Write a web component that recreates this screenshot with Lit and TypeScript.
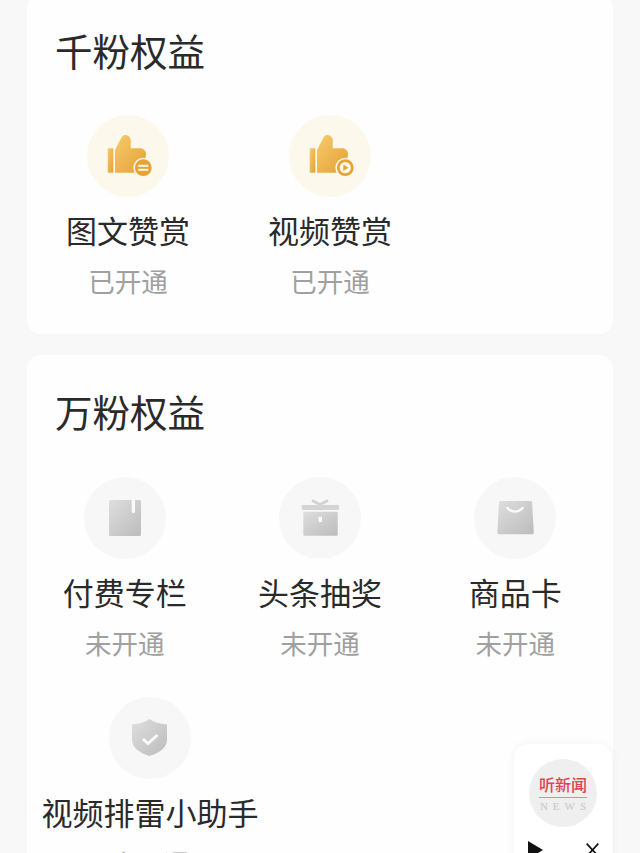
import { LitElement, html, css, svg } from "lit";
import { customElement } from "lit/decorators.js";

const thumb = (badge: unknown) => html`<svg viewBox="0 0 48 48" width="48" height="48">
  <defs><linearGradient id="gold" x1="0" y1="0" x2="1" y2="1"><stop offset="0" stop-color="#f6cb6c"/><stop offset="1" stop-color="#e5a033"/></linearGradient></defs>
  <rect x="3.700" y="16.300" width="5.600" height="24.400" fill="url(#gold)"/>
  <path d="M11 40.700V18l6.500-12.500C18.300 3.900 19.600 3 21 3c3 0 5.700 2.200 5.700 5.200v8.100H36c3.500 0 6 2.600 6 5.700 0 2-.6 4-1.400 6L35 40.700z" fill="url(#gold)"/>
  <circle cx="39.300" cy="35.700" r="10" fill="#fdf8ec"/>
  <circle cx="39.300" cy="35.700" r="8.400" fill="#e6a437"/>
  ${badge}
</svg>`;
const eq = svg`<rect x="34.300" y="32.800" width="10" height="2" fill="#fdf8ec"/><rect x="34.300" y="36.800" width="10" height="2" fill="#fdf8ec"/>`;
const play = svg`<circle cx="39.300" cy="35.700" r="5.600" fill="#fdf8ec"/><path d="M37.300 32.500l5.200 3.200-5.200 3.200z" fill="#e6a437"/>`;
const G = svg`<defs><linearGradient id="grey" x1="0" y1="0" x2="1" y2="1"><stop offset="0" stop-color="#dedede"/><stop offset="1" stop-color="#bcbcbc"/></linearGradient></defs>`;
const book = html`<svg viewBox="0 0 48 48" width="48" height="48">${G}
  <rect x="8" y="6" width="32" height="36" rx="1.500" fill="url(#grey)"/>
  <rect x="30.700" y="5" width="3.300" height="14" rx="1.600" fill="#fafafa"/></svg>`;
const gift = html`<svg viewBox="0 0 48 48" width="48" height="48">${G}
  <path d="M16 6.500l8 4 8-4" fill="none" stroke="#d2d2d2" stroke-width="2.600"/>
  <rect x="5.700" y="11" width="37.300" height="5" rx="1" fill="#d4d4d4"/>
  <rect x="7.300" y="17.700" width="34.400" height="24" rx="1" fill="url(#grey)"/>
  <rect x="22.500" y="22.800" width="3.500" height="5.200" fill="#fafafa"/></svg>`;
const bag = html`<svg viewBox="0 0 48 48" width="48" height="48">${G}
  <path d="M9.500 7h30c1 0 1.500.5 1.600 1.500L42.800 38.500c0 1-.7 1.800-1.700 1.800H8c-1 0-1.700-.8-1.700-1.800L8 8.500C8 7.500 8.500 7 9.500 7z" fill="url(#grey)"/>
  <path d="M16.500 14c4 4.800 11 4.800 15 0" fill="none" stroke="#fafafa" stroke-width="2.400" stroke-linecap="round"/></svg>`;
const shield = html`<svg viewBox="0 0 48 48" width="48" height="48">${G}
  <path d="M23.500 5c4 3 10 5 17.500 5.500v15c0 8-7.500 13.500-17.500 16.500C13.500 39 6 33.500 6 25.500v-15C13.500 10 19.500 8 23.500 5z" fill="url(#grey)"/>
  <path d="M17 25l5 4.500 9.500-8.500" fill="none" stroke="#fafafa" stroke-width="3"/></svg>`;

@customElement("app-root")
export class AppRoot extends LitElement {
  static styles = css`
    :host { display: block; width: 640px; height: 853px; overflow: hidden; position: relative; background: #f8f8f8;
      font-family: "Noto Sans CJK SC", "Liberation Sans", sans-serif; }
    .page { margin-top: -6px; padding: 0 27px; display: flex; flex-direction: column; gap: 21px; }
    .card { background: #fefefe; border-radius: 14px; height: 340px; box-sizing: border-box; padding: 28px 0 0; flex: none; }
    .card.big { height: 560px; }
    .title { font-size: 37.500px; line-height: 56px; margin-left: 28px; color: #2a2a2a; font-weight: 400; white-space: nowrap; }
    .grid { display: grid; margin-top: 37px; }
    .big .grid { margin-top: 38px; }
    .two { grid-template-columns: 202px 202px; }
    .three { grid-template-columns: repeat(3, minmax(0, 1fr)); }
    .item { height: 220px; display: flex; flex-direction: column; align-items: center; }
    .wide { width: 216px; margin-left: 15px; }
    .circle { width: 82px; height: 82px; border-radius: 50%; background: #f8f7f7; display: flex; align-items: center; justify-content: center; flex: none; }
    .gold .circle { background: #fdf8ec; }
    .label { font-size: 31px; line-height: 44px; margin-top: 11px; color: #2a2a2a; white-space: nowrap; }
    .status { font-size: 26.500px; line-height: 38px; margin-top: 10px; color: #a0a0a0; white-space: nowrap; }
    .player { position: absolute; left: 514px; top: 744px; width: 98px; height: 130px; background: #fff; border-radius: 14px;
      box-shadow: 0 0 10px rgba(0,0,0,.05); display: flex; flex-direction: column; align-items: center; padding-top: 15px; box-sizing: border-box; }
    .logo { width: 68px; height: 68px; border-radius: 50%; background: #efefef; display: flex; flex-direction: column; align-items: center; justify-content: center; }
    .cn { font-size: 16px; line-height: 20px; font-weight: 500; color: #d8474d; border-bottom: 1px solid #d98d90; padding-bottom: 3px; white-space: nowrap; }
    .en { font-family: "Liberation Serif", serif; font-size: 11px; line-height: 13px; letter-spacing: 5px; margin-right: -5px; color: #c6c6c6; margin-top: 2px; }
    .ctrl { width: 100%; display: flex; justify-content: space-between; padding: 14px 13px 0 14px; box-sizing: border-box; }
    .ctrl svg { flex: none; }
    .close { margin-top: 2px; }
  `;

  private item(icon: unknown, label: string, status: string, cls = "") {
    return html`<div class="item ${cls}"><div class="circle">${icon}</div><div class="label">${label}</div><div class="status">${status}</div></div>`;
  }

  render() {
    return html`<div class="page">
      <section class="card">
        <div class="title">千粉权益</div>
        <div class="grid two">
          ${this.item(thumb(eq), "图文赞赏", "已开通", "gold")}
          ${this.item(thumb(play), "视频赞赏", "已开通", "gold")}
        </div>
      </section>
      <section class="card big">
        <div class="title">万粉权益</div>
        <div class="grid three">
          ${this.item(book, "付费专栏", "未开通")}
          ${this.item(gift, "头条抽奖", "未开通")}
          ${this.item(bag, "商品卡", "未开通")}
          ${this.item(shield, "视频排雷小助手", "未开通", "wide")}
        </div>
      </section>
    </div>
    <aside class="player">
      <div class="logo"><div class="cn">听新闻</div><div class="en">NEWS</div></div>
      <div class="ctrl">
        <svg width="15" height="18" viewBox="0 0 15 18"><path d="M0 0l15 9-15 9z" fill="#111"/></svg>
        <svg class="close" width="13" height="14" viewBox="0 0 13 14"><path d="M.7 .7l11.600 12.600M12.300 .7L.7 13.300" stroke="#111" stroke-width="1.700"/></svg>
      </div>
    </aside>`;
  }
}
